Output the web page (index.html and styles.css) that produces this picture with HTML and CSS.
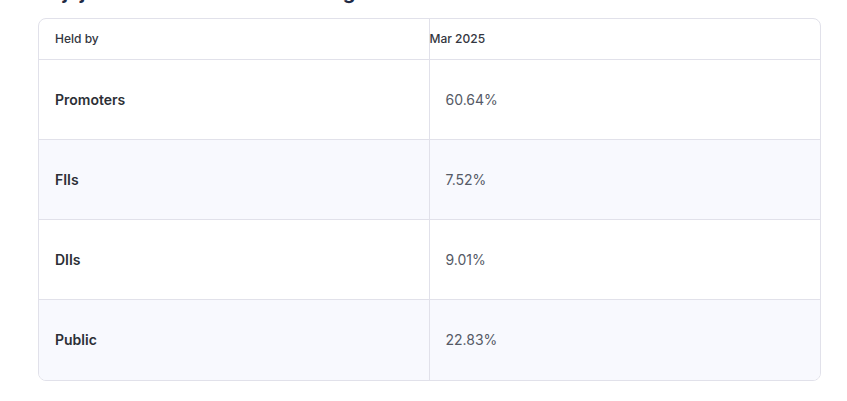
FILE: index.html
```html
<!DOCTYPE html>
<html lang="en">
<head>
    <meta charset="UTF-8">
    <title>Shareholding Pattern</title>
    <meta name="viewport" content="width=device-width, initial-scale=1.0">
    <link rel="stylesheet" href="styles.css">
</head>
<body>

    <section class="holding">
        <h2 class="holding-title">Bajaj Finance Ltd. Shareholding Pattern</h2>

        <div class="table-wrap">
            <table class="holding-table">
                <thead>
                    <tr>
                        <th class="col-name">Held by</th>
                        <th class="col-value">Mar 2025</th>
                    </tr>
                </thead>
                <tbody>
                    <tr>
                        <td class="col-name">Promoters</td>
                        <td class="col-value">60.64%</td>
                    </tr>
                    <tr class="alt">
                        <td class="col-name">FIIs</td>
                        <td class="col-value">7.52%</td>
                    </tr>
                    <tr>
                        <td class="col-name">DIIs</td>
                        <td class="col-value">9.01%</td>
                    </tr>
                    <tr class="alt">
                        <td class="col-name">Public</td>
                        <td class="col-value">22.83%</td>
                    </tr>
                </tbody>
            </table>
        </div>
    </section>

</body>
</html>
```

FILE: styles.css
```css
* {
    box-sizing: border-box;
}

body {
    font-family: 'Inter', 'Roboto', sans-serif;
    margin: 0;
    padding: 0;
    background: #ffffff;
    color: #2c2f36;
}

.holding {
    padding: 0 26px 0 38px;
}

.holding-title {
    margin: -20px 0 14px;
    font-size: 20px;
    line-height: 24px;
    font-weight: 700;
    word-spacing: 4px;
    color: #1f2a44;
    white-space: nowrap;
}

.table-wrap {
    border: 1px solid #e1e1ea;
    border-radius: 8px;
    overflow: hidden;
}

.holding-table {
    width: 100%;
    border-collapse: collapse;
    table-layout: fixed;
}

.holding-table th,
.holding-table td {
    text-align: left;
    border-bottom: 1px solid #e1e1ea;
}

.holding-table tr:last-child td {
    height: 81px;
    border-bottom: none;
}

.holding-table .col-name {
    width: 390px;
    border-right: 1px solid #e1e1ea;
    padding-left: 16px;
}

.holding-table th {
    height: 40px;
    font-size: 12px;
    font-weight: 500;
    color: #333640;
}

.holding-table th.col-value {
    padding-left: 0;
}

.holding-table td {
    height: 80px;
    font-size: 14px;
}

.holding-table td.col-name {
    font-weight: 600;
    color: #2c2f36;
}

.holding-table td.col-value {
    padding-left: 16px;
    color: #555a66;
}

.alt {
    background: #f8f9fe;
}
```
